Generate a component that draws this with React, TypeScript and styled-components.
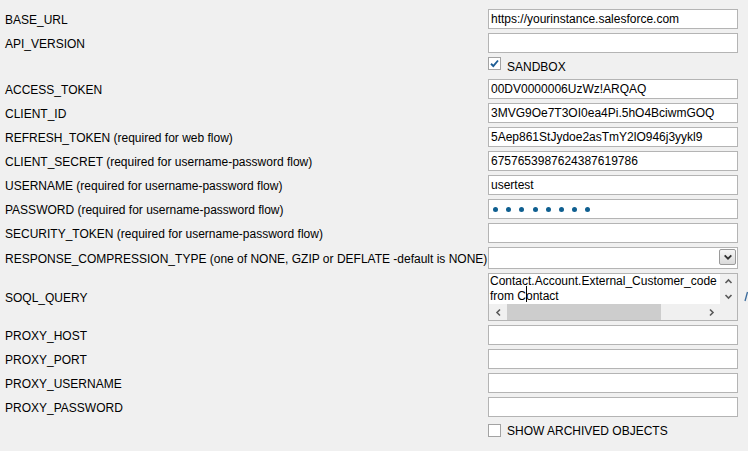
import React from "react";
import styled, { createGlobalStyle } from "styled-components";

const Global = createGlobalStyle`
  html, body { margin: 0; padding: 0; background: #f0f0f0; }
  body {
    font-family: "Liberation Sans", Arial, sans-serif;
    font-size: 12px;
    color: #000;
    width: 748px;
    height: 451px;
    overflow: hidden;
  }
`;

const Form = styled.div`
  display: grid;
  grid-template-columns: 483px 250px 1fr;
  row-gap: 4px;
  padding: 9px 0 0 5px;
  align-items: center;
`;

const Label = styled.div`
  grid-column: 1;
  box-sizing: border-box;
  height: 20px;
  padding-top: 2px;
  line-height: 18px;
  white-space: nowrap;
  overflow: visible;
`;

const TextField = styled.input`
  grid-column: 2;
  box-sizing: border-box;
  width: 250px;
  height: 20px;
  margin: 0;
  padding: 0 2px 1px 2px;
  border: 1px solid #b4b4b4;
  background: #fff;
  font-family: "Liberation Sans", Arial, sans-serif;
  font-size: 12px;
  color: #000;
  outline: none;
`;

const PasswordBox = styled.div`
  grid-column: 2;
  box-sizing: border-box;
  height: 20px;
  border: 1px solid #b4b4b4;
  background: #fff;
  display: flex;
  align-items: center;
  gap: 8.2px;
  padding: 1px 0 0 4px;
`;

const Dot = styled.span`
  width: 5px;
  height: 5px;
  border-radius: 50%;
  background: #0f5f90;
`;

const CheckRow = styled.label`
  grid-column: 2;
  display: flex;
  align-items: flex-start;
  gap: 6px;
  height: 18px;
  line-height: 18px;
  white-space: nowrap;
`;

const CheckBox = styled.span<{ $top?: number }>`
  box-sizing: border-box;
  width: 13px;
  height: 13px;
  margin-top: ${(p) => p.$top ?? 0}px;
  border: 1px solid #a3a3a3;
  background: #fff;
  display: flex;
  align-items: center;
  justify-content: center;
  flex: none;
`;

const CheckText = styled.span<{ $shift?: number }>`
  padding-top: ${(p) => p.$shift ?? 0}px;
`;

const Combo = styled.div`
  grid-column: 2;
  box-sizing: border-box;
  height: 22px;
  border: 1px solid #b4b4b4;
  background: #fff;
  display: flex;
  justify-content: flex-end;
  align-items: flex-start;
  padding: 1px 1px 0 0;
`;

const ComboButton = styled.span`
  box-sizing: border-box;
  width: 17px;
  height: 16px;
  border: 1px solid #9a9a9a;
  border-radius: 2px;
  background: linear-gradient(#f6f6f6, #dadada);
  display: flex;
  align-items: center;
  justify-content: center;
`;

const ScrollArea = styled.div`
  grid-column: 2;
  box-sizing: border-box;
  height: 48px;
  border: 1px solid #b4b4b4;
  background: #fff;
  display: grid;
  grid-template-columns: 1fr 17px;
  grid-template-rows: 1fr 16px;
`;

const QueryText = styled.div`
  overflow: hidden;
  white-space: pre;
  line-height: 15px;
  padding-left: 1px;
`;

const Caret = styled.span`
  display: inline-block;
  width: 1px;
  height: 16px;
  background: #000;
  margin: -3px -1px 0 0;
  vertical-align: -2px;
`;

const VScroll = styled.div`
  background: #f0f0f0;
  display: flex;
  flex-direction: column;
`;

const HScroll = styled.div`
  background: #f0f0f0;
  display: flex;
  align-items: stretch;
`;

const ArrowBtn = styled.span<{ $w?: number; $h?: number }>`
  width: ${(p) => p.$w ?? 17}px;
  height: ${(p) => (p.$h ? p.$h + "px" : "auto")};
  flex: none;
  display: flex;
  align-items: center;
  justify-content: center;
`;

const Thumb = styled.span`
  width: 154px;
  flex: none;
  background: #cdcdcd;
`;

const Spacer = styled.span`
  flex: 1;
`;

const Corner = styled.div`
  background: #f0f0f0;
`;

const Edge = styled.div`
  grid-column: 3;
  display: flex;
  align-items: center;
  padding-left: 6px;
  overflow: hidden;
`;

const Chevron = ({ dir, color = "#5a5a5a", size = 9 }: { dir: "up" | "down" | "left" | "right"; color?: string; size?: number }) => {
  const pts: Record<string, string> = {
    up: "1.5,6 4.5,3 7.5,6",
    down: "1.5,3 4.5,6 7.5,3",
    left: "6,1.5 3,4.5 6,7.5",
    right: "3,1.5 6,4.5 3,7.5",
  };
  return (
    <svg width={size} height={size} viewBox="0 0 9 9">
      <polyline points={pts[dir]} fill="none" stroke={color} strokeWidth="1.6" />
    </svg>
  );
};

const CheckMark = () => (
  <svg width="11" height="11" viewBox="0 0 11 11">
    <polyline points="2,5.8 4.3,8 9,2.5" fill="none" stroke="#1d5d95" strokeWidth="1.9" />
  </svg>
);

type Row = { label: string; value?: string };

const upper: Row[] = [
  { label: "ACCESS_TOKEN", value: "00DV0000006UzWz!ARQAQ" },
  { label: "CLIENT_ID", value: "3MVG9Oe7T3OI0ea4Pi.5hO4BciwmGOQ" },
  { label: "REFRESH_TOKEN (required for web flow)", value: "5Aep861StJydoe2asTmY2lO946j3yykl9" },
  { label: "CLIENT_SECRET (required for username-password flow)", value: "6757653987624387619786" },
  { label: "USERNAME (required for username-password flow)", value: "usertest" },
];

const proxies = ["PROXY_HOST", "PROXY_PORT", "PROXY_USERNAME", "PROXY_PASSWORD"];

export default function App() {
  return (
    <>
      <Global />
      <Form>
        <Label>BASE_URL</Label>
        <TextField readOnly value="https://yourinstance.salesforce.com" />
        <Label>API_VERSION</Label>
        <TextField readOnly value="" />

        <CheckRow>
          <CheckBox>
            <CheckMark />
          </CheckBox>
          <CheckText $shift={1}>SANDBOX</CheckText>
        </CheckRow>

        {upper.map((r) => (
          <React.Fragment key={r.label}>
            <Label>{r.label}</Label>
            <TextField readOnly value={r.value ?? ""} />
          </React.Fragment>
        ))}

        <Label>PASSWORD (required for username-password flow)</Label>
        <PasswordBox>
          {Array.from({ length: 8 }).map((_, i) => (
            <Dot key={i} />
          ))}
        </PasswordBox>

        <Label>SECURITY_TOKEN (required for username-password flow)</Label>
        <TextField readOnly value="" />

        <Label>RESPONSE_COMPRESSION_TYPE (one of NONE, GZIP or DEFLATE -default is NONE)</Label>
        <Combo>
          <ComboButton>
            <Chevron dir="down" color="#303030" size={10} />
          </ComboButton>
        </Combo>

        <Label>SOQL_QUERY</Label>
        <ScrollArea>
          <QueryText>
            {"Contact.Account.External_Customer_code\nfrom C"}
            <Caret />
            {"ontact"}
          </QueryText>
          <VScroll>
            <ArrowBtn $h={15}>
              <Chevron dir="up" />
            </ArrowBtn>
            <ArrowBtn $h={14}>
              <Chevron dir="down" />
            </ArrowBtn>
          </VScroll>
          <HScroll>
            <ArrowBtn $w={18}>
              <Chevron dir="left" />
            </ArrowBtn>
            <Thumb />
            <Spacer />
            <ArrowBtn $w={17}>
              <Chevron dir="right" />
            </ArrowBtn>
          </HScroll>
          <Corner />
        </ScrollArea>
        <Edge>
          <svg width="4" height="12" viewBox="0 0 4 12">
            <line x1="3.5" y1="1" x2="1" y2="10" stroke="#3a6b9c" strokeWidth="1.3" />
          </svg>
        </Edge>

        {proxies.map((p) => (
          <React.Fragment key={p}>
            <Label>{p}</Label>
            <TextField readOnly value="" />
          </React.Fragment>
        ))}

        <CheckRow>
          <CheckBox $top={3} />
          <CheckText $shift={1}>SHOW ARCHIVED OBJECTS</CheckText>
        </CheckRow>
      </Form>
    </>
  );
}
